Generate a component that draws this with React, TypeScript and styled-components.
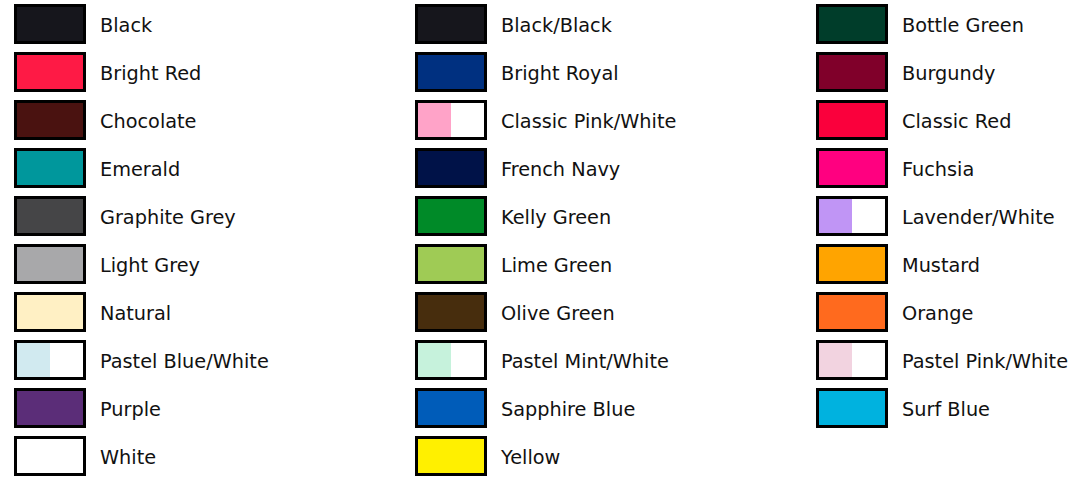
import styled, { createGlobalStyle } from 'styled-components';

type Colour = { name: string; fill: string; split?: boolean };

const colours: Colour[] = [
  { name: 'Black', fill: '#16161c' },
  { name: 'Bright Red', fill: '#fe1a45' },
  { name: 'Chocolate', fill: '#4a1210' },
  { name: 'Emerald', fill: '#00979c' },
  { name: 'Graphite Grey', fill: '#454547' },
  { name: 'Light Grey', fill: '#a8a8aa' },
  { name: 'Natural', fill: '#fff0c4' },
  { name: 'Pastel Blue/White', fill: '#d1eaf0', split: true },
  { name: 'Purple', fill: '#5b2d78' },
  { name: 'White', fill: '#ffffff' },
  { name: 'Black/Black', fill: '#16161c' },
  { name: 'Bright Royal', fill: '#003080' },
  { name: 'Classic Pink/White', fill: '#ffa3c8', split: true },
  { name: 'French Navy', fill: '#001248' },
  { name: 'Kelly Green', fill: '#008a28' },
  { name: 'Lime Green', fill: '#9fcb55' },
  { name: 'Olive Green', fill: '#472d0d' },
  { name: 'Pastel Mint/White', fill: '#c6f2dc', split: true },
  { name: 'Sapphire Blue', fill: '#005cb9' },
  { name: 'Yellow', fill: '#fff000' },
  { name: 'Bottle Green', fill: '#003d2a' },
  { name: 'Burgundy', fill: '#80002a' },
  { name: 'Classic Red', fill: '#fa003c' },
  { name: 'Fuchsia', fill: '#ff0080' },
  { name: 'Lavender/White', fill: '#c095f5', split: true },
  { name: 'Mustard', fill: '#ffa400' },
  { name: 'Orange', fill: '#ff6a1e' },
  { name: 'Pastel Pink/White', fill: '#f2d3e0', split: true },
  { name: 'Surf Blue', fill: '#00b2df' },
];

const GlobalStyle = createGlobalStyle`
  body {
    margin: 0;
    background: #ffffff;
    font-family: 'DejaVu Sans', sans-serif;
  }
`;

const App = () => {
  return (
    <>
      <GlobalStyle />
      <ColourGrid>
        {colours.map((c) => (
          <ColourItem key={c.name}>
            <Swatch $fill={c.fill} $split={c.split} />
            <ColourName>{c.name}</ColourName>
          </ColourItem>
        ))}
      </ColourGrid>
    </>
  );
};

const ColourGrid = styled.div`
  display: grid;
  grid-template-columns: 401px 401px 253px;
  grid-template-rows: repeat(10, 48px);
  grid-auto-flow: column;
  padding: 4px 0 0 14px;
`;

const ColourItem = styled.div`
  display: flex;
  align-items: flex-start;
  gap: 14px;
  white-space: nowrap;
`;

const Swatch = styled.div<{ $fill: string; $split?: boolean }>`
  width: 72px;
  height: 40px;
  box-sizing: border-box;
  border: 3px solid #000000;
  flex-shrink: 0;
  background: ${(p) =>
    p.$split
      ? `linear-gradient(to right, ${p.$fill} 0 50%, #ffffff 50% 100%)`
      : p.$fill};
`;

const ColourName = styled.span`
  font-size: 19.3px;
  line-height: 40px;
  padding-top: 2px;
  color: #111111;
`;

export default App;
